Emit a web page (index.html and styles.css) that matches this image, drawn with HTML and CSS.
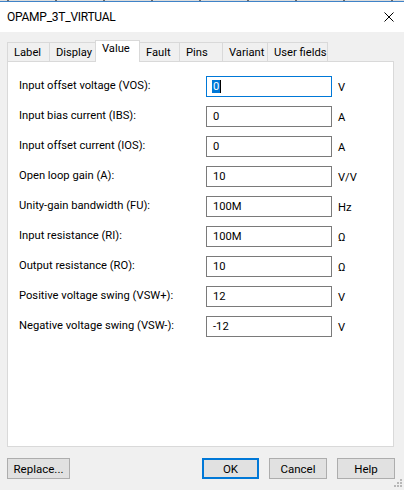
FILE: index.html
```html
<!DOCTYPE html>
<html>
<head>
<meta charset="utf-8">
<link rel="stylesheet" href="styles.css">
</head>
<body>
<div class="window">
  <div class="taskstrip"></div>
  <div class="titlebar">
    <span class="title">OPAMP_3T_VIRTUAL</span>
    <svg class="close" width="10" height="10" viewBox="0 0 10 10"><path d="M0.5 0.5 L9.5 9.5 M9.5 0.5 L0.5 9.5" stroke="#000" stroke-width="1" fill="none"/></svg>
  </div>
  <div class="body">
    <div class="tabs">
      <div class="tab t-label">Label</div>
      <div class="tab t-display">Display</div>
      <div class="tab t-value active">Value</div>
      <div class="tab t-fault">Fault</div>
      <div class="tab t-pins">Pins</div>
      <div class="tab t-variant">Variant</div>
      <div class="tab t-user">User fields</div>
    </div>
    <div class="panel">
      <div class="grid">
        <div class="lbl">Input offset voltage (VOS):</div>
        <div class="field focused"><span class="sel">0</span><span class="caret"></span></div>
        <div class="unit">V</div>

        <div class="lbl">Input bias current (IBS):</div>
        <div class="field">0</div>
        <div class="unit">A</div>

        <div class="lbl">Input offset current (IOS):</div>
        <div class="field">0</div>
        <div class="unit">A</div>

        <div class="lbl">Open loop gain (A):</div>
        <div class="field">10</div>
        <div class="unit">V/V</div>

        <div class="lbl">Unity-gain bandwidth (FU):</div>
        <div class="field">100M</div>
        <div class="unit">Hz</div>

        <div class="lbl">Input resistance (RI):</div>
        <div class="field">100M</div>
        <div class="unit">Ω</div>

        <div class="lbl">Output resistance (RO):</div>
        <div class="field">10</div>
        <div class="unit">Ω</div>

        <div class="lbl">Positive voltage swing (VSW+):</div>
        <div class="field">12</div>
        <div class="unit">V</div>

        <div class="lbl">Negative voltage swing (VSW-):</div>
        <div class="field">-12</div>
        <div class="unit">V</div>
      </div>
    </div>
    <div class="buttons">
      <button class="btn b-replace">Replace...</button>
      <div class="spacer"></div>
      <button class="btn b-ok default">OK</button>
      <button class="btn b-cancel">Cancel</button>
      <button class="btn b-help">Help</button>
    </div>
  </div>
  <svg class="grip" width="9" height="9" viewBox="0 0 9 9">
    <rect x="6" y="0" width="2" height="2" fill="#b8b8b8"/>
    <rect x="3" y="3" width="2" height="2" fill="#b8b8b8"/>
    <rect x="6" y="3" width="2" height="2" fill="#b8b8b8"/>
    <rect x="0" y="6" width="2" height="2" fill="#b8b8b8"/>
    <rect x="3" y="6" width="2" height="2" fill="#b8b8b8"/>
    <rect x="6" y="6" width="2" height="2" fill="#b8b8b8"/>
  </svg>
</div>
</body>
</html>
```

FILE: styles.css
```css
* { box-sizing: border-box; }
html, body { margin: 0; padding: 0; }
body {
  width: 404px;
  height: 490px;
  overflow: hidden;
  background: #f0f0f0;
  font-family: Roboto, "Liberation Sans", sans-serif;
  font-size: 11.2px;
  color: #000;
}
.window {
  position: relative;
  width: 404px;
  height: 490px;
}
.taskstrip {
  height: 2px;
  background:
    linear-gradient(#3f83c8, #3f83c8) 0 1px / 100% 1px no-repeat,
    repeating-linear-gradient(90deg, transparent 0 7px, #6a6a6a 7px 9px, transparent 9px 48px) 0 0 / 100% 1px no-repeat,
    #dcdcdc;
}
.titlebar {
  height: 30px;
  background: #fff;
  display: flex;
  align-items: center;
  justify-content: space-between;
  padding: 0 10px 0 7px;
}
.title {
  font-size: 12px;
  letter-spacing: -0.25px;
  margin-top: -1px;
}
.close { display: block; margin-top: -1px; }
.body {
  padding: 8px 10px 0 7px;
}
.tabs {
  display: flex;
  align-items: flex-end;
  height: 21px;
  position: relative;
  z-index: 1;
}
.tab {
  height: 19px;
  border: 1px solid #d9d9d9;
  border-bottom: none;
  background: #f0f0f0;
  padding: 3px 0 0 6px;
  margin-right: -1px;
  white-space: nowrap;
}
.tab.active {
  height: 22px;
  margin-bottom: -1px;
  background: #fff;
  padding-top: 1px;
  position: relative;
}
.t-label { width: 43px; }
.t-display { width: 47px; }
.t-value { width: 45px; }
.t-fault { width: 41px; }
.t-pins { width: 44px; }
.t-variant { width: 46px; }
.t-user { width: 61px; }
.panel {
  width: 387px;
  height: 386px;
  background: #fff;
  border: 1px solid #d9d9d9;
  padding: 14px 0 0 11px;
}
.grid {
  display: grid;
  grid-template-columns: 181px 126px auto;
  grid-auto-rows: 21px;
  row-gap: 9px;
  column-gap: 6px;
  align-items: center;
}
.lbl { margin-top: -3px; white-space: nowrap; }
.unit { margin-top: 1px; }
.field {
  height: 21px;
  border: 1px solid #7a7a7a;
  padding: 3px 0 0 6px;
  display: flex;
  align-items: flex-start;
}
.field.focused { border-color: #0078d7; }
.sel {
  background: #0078d7;
  color: #fff;
  padding: 0 1px;
  line-height: 13px;
  margin-left: -1px;
}
.caret {
  display: inline-block;
  width: 1px;
  height: 13px;
  background: #000;
}
.buttons {
  display: flex;
  margin-top: 11px;
  gap: 10px;
  width: 388px;
}
.spacer { flex: 1; }
.btn {
  height: 21px;
  background: #e1e1e1;
  border: 1px solid #adadad;
  font-family: inherit;
  font-size: 11.5px;
  color: #000;
  padding: 0;
  margin: 0;
}
.b-replace { width: 63px; }
.b-ok { width: 57px; }
.b-cancel { width: 58px; }
.b-help { width: 58px; }
.btn.default { border: 2px solid #0078d7; }
.grip {
  position: absolute;
  right: 1px;
  bottom: 2px;
}
```
